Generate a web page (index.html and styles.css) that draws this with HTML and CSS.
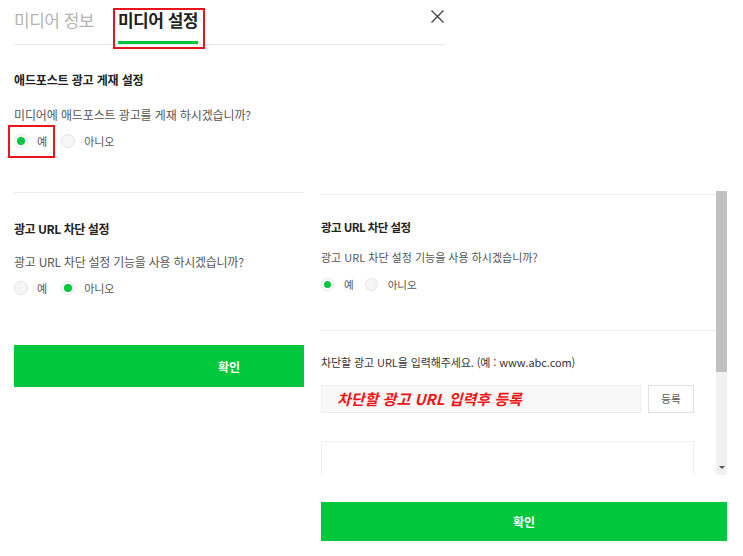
FILE: index.html
```html
<!DOCTYPE html>
<html lang="ko">
<head>
<meta charset="utf-8">
<title>미디어 설정</title>
<link rel="stylesheet" href="styles.css">
</head>
<body>
<div class="page">
  <header class="tabs">
    <span class="tab">미디어 정보</span>
    <span class="tab active">미디어 설정<span class="mark mark-tab"></span></span>
    <button class="close" aria-label="닫기">
      <svg width="13" height="13" viewBox="0 0 13 13"><path d="M0.5 0.5L12.5 12.5M12.5 0.5L0.5 12.5" stroke="#444" stroke-width="1.4" fill="none"/></svg>
    </button>
  </header>

  <section class="sec1">
    <h3 class="title">애드포스트 광고 게재 설정</h3>
    <p class="q">미디어에 애드포스트 광고를 게재 하시겠습니까?</p>
    <div class="radios">
      <span class="opt"><i class="rd on"></i>예<span class="mark mark-radio"></span></span>
      <span class="opt"><i class="rd"></i>아니오</span>
    </div>
  </section>

  <div class="lower">
    <div class="left">
      <div class="inner">
        <div class="divider"></div>
        <h3 class="title t2">광고 URL 차단 설정</h3>
        <p class="q q2">광고 URL 차단 설정 기능을 사용 하시겠습니까?</p>
        <div class="radios">
          <span class="opt"><i class="rd"></i>예</span>
          <span class="opt"><i class="rd on"></i>아니오</span>
        </div>
        <button class="ok">확인</button>
      </div>
    </div>

    <div class="right">
      <div class="scrollbox">
        <div class="content">
          <div class="rdiv first"></div>
          <h3 class="rtitle">광고 URL 차단 설정</h3>
          <p class="rq">광고 URL 차단 설정 기능을 사용 하시겠습니까?</p>
          <div class="rradios">
            <span class="ropt"><i class="rrd on"></i>예</span>
            <span class="ropt"><i class="rrd"></i>아니오</span>
          </div>
          <div class="rdiv second"></div>
          <p class="rlabel">차단할 광고 URL을 입력해주세요. (예 : www.abc.com)</p>
          <div class="inrow">
            <div class="input"><span class="hint">차단할 광고 URL 입력후 등록</span></div>
            <button class="reg">등록</button>
          </div>
          <div class="tarea"></div>
        </div>
        <div class="sbar">
          <div class="thumb"></div>
          <span class="arrow"></span>
        </div>
      </div>
      <button class="ok ok-r">확인</button>
    </div>
  </div>
</div>
</body>
</html>
```
FILE: styles.css
```css
* { box-sizing: border-box; }
body {
  margin: 0;
  background: #fff;
  font-family: "Noto Sans CJK KR", "Noto Sans", sans-serif;
  color: #333;
}
.page { padding-left: 14px; }

.tabs {
  display: flex;
  align-items: flex-start;
  width: 430px;
  height: 45px;
  border-bottom: 1px solid #e6e9ea;
}
.tab {
  position: relative;
  height: 44px;
  padding: 7px 0 8px;
  font-size: 17px;
  line-height: 26px;
  letter-spacing: -0.5px;
  color: #b4b4b4;
  border-bottom: 3px solid transparent;
  margin-right: 24px;
  white-space: nowrap;
}
.tab.active {
  color: #222;
  font-weight: 700;
  border-bottom-color: #00c73c;
}
.close {
  margin-left: auto;
  margin-top: 10px;
  width: 13px;
  height: 13px;
  padding: 0;
  border: 0;
  background: none;
  display: block;
}
.close svg { display: block; }

.mark {
  position: absolute;
  border: 2px solid #e8161b;
  pointer-events: none;
}
.mark-tab { left: -5px; right: -7px; top: 8px; bottom: -8px; }
.mark-radio { left: -6px; right: -8px; top: -9px; bottom: -10px; }

.sec1 { width: 290px; }
.title {
  margin: 26px 0 0;
  font-size: 12px;
  line-height: 18px;
  font-weight: 700;
  color: #222;
  letter-spacing: -0.15px;
}
.q {
  margin: 17px 0 0;
  font-size: 12px;
  line-height: 18px;
  color: #555;
  letter-spacing: -0.12px;
  white-space: nowrap;
}
.radios {
  margin-top: 10px;
  display: flex;
  align-items: center;
  height: 14px;
}
.opt {
  position: relative;
  display: inline-flex;
  align-items: center;
  font-size: 11px;
  line-height: 14px;
  color: #555;
  margin-right: 14px;
}
.rd {
  position: relative;
  width: 14px;
  height: 14px;
  border: 1px solid #e4e4e4;
  border-radius: 50%;
  background: #f6f6f6;
  margin-right: 9px;
}
.rd.on { background: #fff; }
.rd.on::after {
  content: "";
  position: absolute;
  left: 2px; top: 2px;
  width: 8px; height: 8px;
  border-radius: 50%;
  background: #00c73c;
}

.lower {
  margin-top: 43px;
  display: flex;
  gap: 17px;
}
.left { width: 290px; flex: none; overflow: hidden; }
.inner { width: 430px; }
.divider { margin-top: 1px; height: 1px; background: #ececec; }
.title.t2 { margin-top: 27px; letter-spacing: -0.45px; }
.q.q2 { margin-top: 15px; letter-spacing: -0.25px; }
.ok {
  display: block;
  margin-top: 50px;
  width: 430px;
  height: 42px;
  border: 0;
  background: #00c73c;
  color: #fff;
  font-family: inherit;
  font-size: 12px;
  font-weight: 700;
}

.right { width: 406px; flex: none; }
.scrollbox { display: flex; height: 284px; }
.content { flex: 1; overflow: hidden; }
.rdiv { height: 1px; background: #ececec; }
.rdiv.first { margin-top: 3px; }
.rtitle {
  margin: 24px 0 0;
  font-size: 11.5px;
  line-height: 17px;
  font-weight: 700;
  color: #222;
  letter-spacing: -0.55px;
}
.rq {
  margin: 13px 0 0;
  font-size: 11px;
  line-height: 17px;
  color: #555;
  letter-spacing: 0;
  white-space: nowrap;
}
.rradios {
  margin-top: 11.5px;
  display: flex;
  align-items: center;
  height: 13px;
}
.ropt {
  display: inline-flex;
  align-items: center;
  font-size: 10.5px;
  line-height: 13px;
  color: #555;
  margin-right: 11px;
}
.rrd {
  position: relative;
  width: 13px;
  height: 13px;
  border: 1px solid #e4e4e4;
  border-radius: 50%;
  background: #f6f6f6;
  margin-right: 10px;
}
.rrd.on { background: #fff; }
.rrd.on::after {
  content: "";
  position: absolute;
  left: 2px; top: 2px;
  width: 7px; height: 7px;
  border-radius: 50%;
  background: #00c73c;
}
.rdiv.second { margin-top: 39px; }
.rlabel {
  margin: 23.5px 0 0;
  font-size: 11px;
  line-height: 17px;
  color: #333;
  letter-spacing: -0.1px;
  white-space: nowrap;
}
.inrow {
  margin-top: 13.5px;
  display: flex;
  gap: 7px;
  height: 28px;
}
.input {
  width: 320px;
  height: 28px;
  background: #f8f8f8;
  border: 1px solid #efefef;
  padding-left: 15px;
  display: flex;
  align-items: center;
}
.hint {
  font-size: 15px;
  font-weight: 700;
  font-style: italic;
  color: #f01414;
  letter-spacing: 0;
  white-space: nowrap;
}
.reg {
  width: 46px;
  height: 28px;
  border: 1px solid #e0e0e0;
  background: #fff;
  color: #555;
  font-family: inherit;
  font-size: 10.5px;
  padding: 0;
}
.tarea {
  margin-top: 28px;
  width: 373px;
  height: 120px;
  border: 1px solid #efefef;
}
.sbar {
  width: 11px;
  flex: none;
  background: #f1f1f1;
  display: flex;
  flex-direction: column;
}
.thumb { height: 181px; background: #c1c1c1; }
.arrow {
  margin-top: auto;
  margin-bottom: 6px;
  align-self: center;
  width: 0; height: 0;
  border-left: 3px solid transparent;
  border-right: 3px solid transparent;
  border-top: 3px solid #505050;
}
.ok-r {
  margin-top: 27px;
  width: 406px;
  height: 39px;
}
```
